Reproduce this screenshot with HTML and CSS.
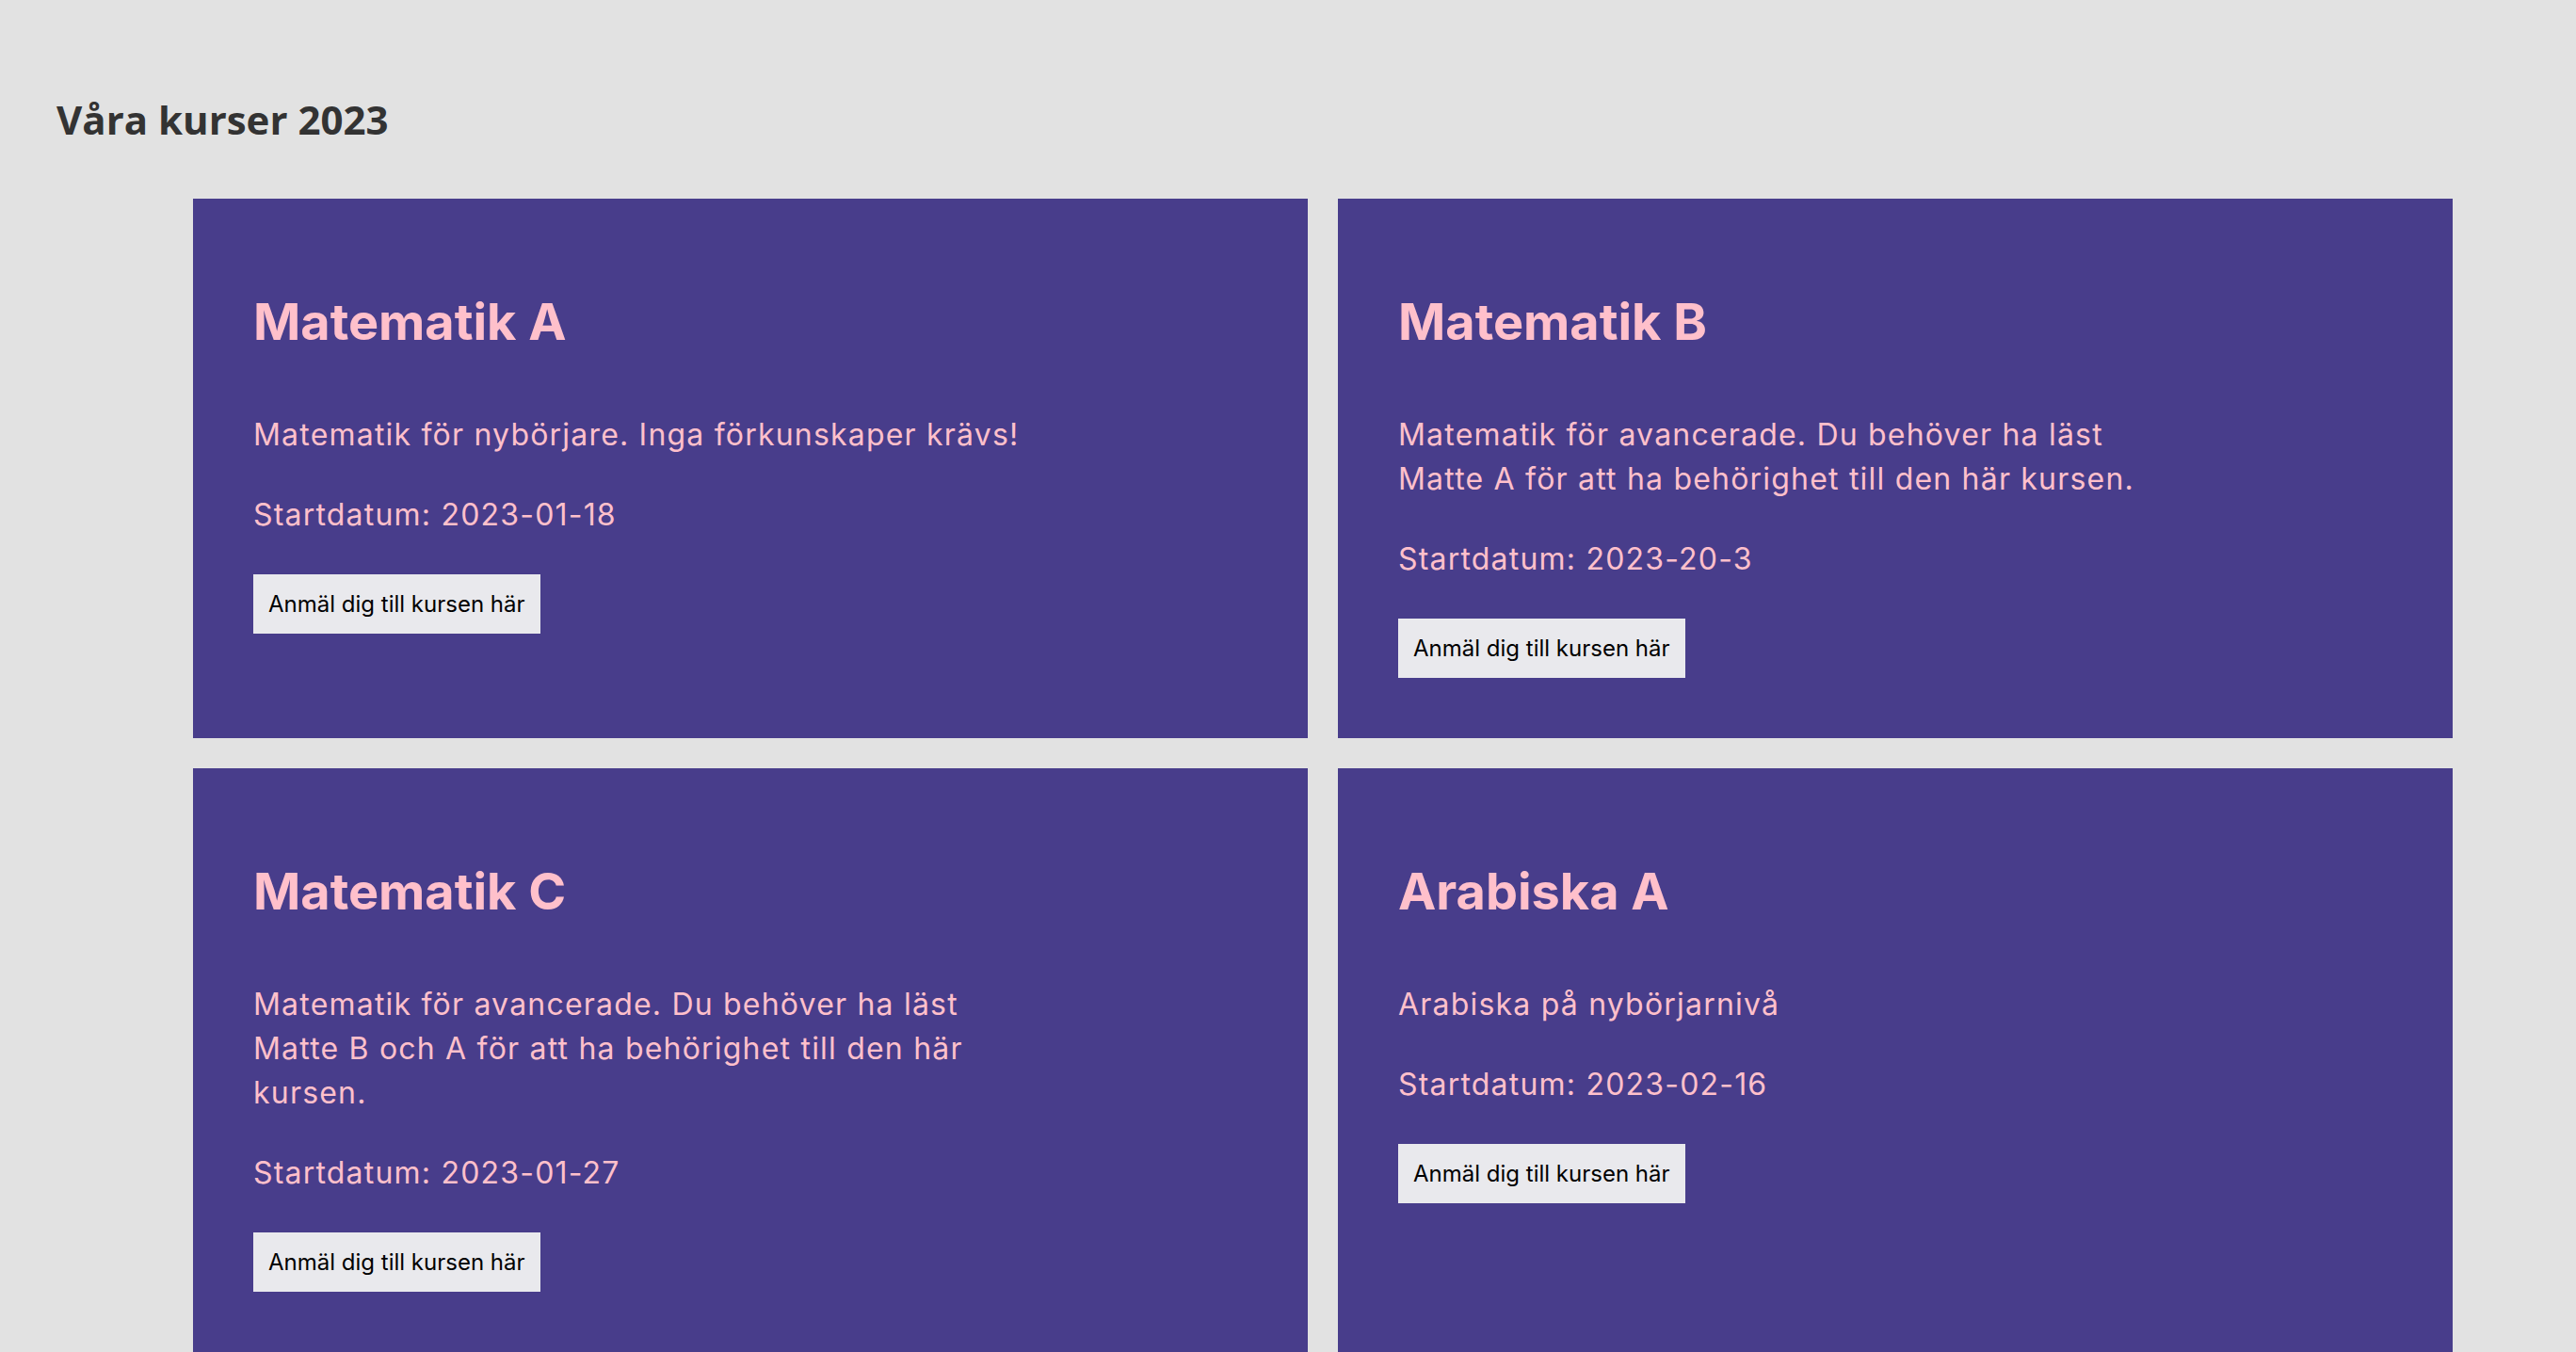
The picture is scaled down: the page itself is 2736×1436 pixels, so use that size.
FILE: index.html
```html
<!DOCTYPE html>
<html lang="sv">
<head>
<meta charset="utf-8">
<title>Våra kurser 2023</title>
<link rel="stylesheet" href="styles.css">
</head>
<body>
<header class="page-header">
  <h1 class="page-title">Våra kurser 2023</h1>
</header>
<main class="course-grid">
  <article class="course-card">
    <h2 class="course-title">Matematik A</h2>
    <p class="course-text">Matematik för nybörjare. Inga förkunskaper krävs!</p>
    <p class="course-text">Startdatum: 2023-01-18</p>
    <button class="course-btn" type="button">Anmäl dig till kursen här</button>
  </article>
  <article class="course-card">
    <h2 class="course-title">Matematik B</h2>
    <p class="course-text">Matematik för avancerade. Du behöver ha läst Matte A för att ha behörighet till den här kursen.</p>
    <p class="course-text">Startdatum: 2023-20-3</p>
    <button class="course-btn" type="button">Anmäl dig till kursen här</button>
  </article>
  <article class="course-card">
    <h2 class="course-title">Matematik C</h2>
    <p class="course-text">Matematik för avancerade. Du behöver ha läst Matte B och A för att ha behörighet till den här kursen.</p>
    <p class="course-text">Startdatum: 2023-01-27</p>
    <button class="course-btn" type="button">Anmäl dig till kursen här</button>
  </article>
  <article class="course-card">
    <h2 class="course-title">Arabiska A</h2>
    <p class="course-text">Arabiska på nybörjarnivå</p>
    <p class="course-text">Startdatum: 2023-02-16</p>
    <button class="course-btn" type="button">Anmäl dig till kursen här</button>
  </article>
</main>
</body>
</html>
```
FILE: styles.css
```css
html, body {
  margin: 0;
  padding: 0;
  background: #e2e2e2;
}

body {
  font-family: "Inter", "Roboto", sans-serif;
}

.page-header {
  padding: 98px 0 0 60px;
}

.page-title {
  margin: 0;
  font-family: "Open Sans", sans-serif;
  font-weight: 700;
  font-size: 42px;
  line-height: 57px;
  color: #333333;
}

.course-grid {
  display: grid;
  grid-template-columns: 1184px 1184px;
  gap: 32px;
  margin: 56px 0 0 205px;
}

.course-card {
  background: #483d8b;
  padding: 64px;
  display: flex;
  flex-direction: column;
  align-items: flex-start;
}

.course-title {
  margin: 34px 0 64px;
  font-size: 54px;
  font-weight: 700;
  line-height: 65px;
  color: #ffc0cb;
}

.course-text {
  margin: 0 0 38px;
  max-width: 826px;
  font-size: 32px;
  line-height: 47px;
  letter-spacing: 1.2px;
  color: #ffc0cb;
}

.course-btn {
  margin-top: 2px;
  padding: 0 16px;
  height: 63px;
  border: none;
  border-radius: 0;
  background: #e9e9ed;
  color: #000000;
  font-family: "Inter", "Roboto", sans-serif;
  font-size: 24px;
}
```
